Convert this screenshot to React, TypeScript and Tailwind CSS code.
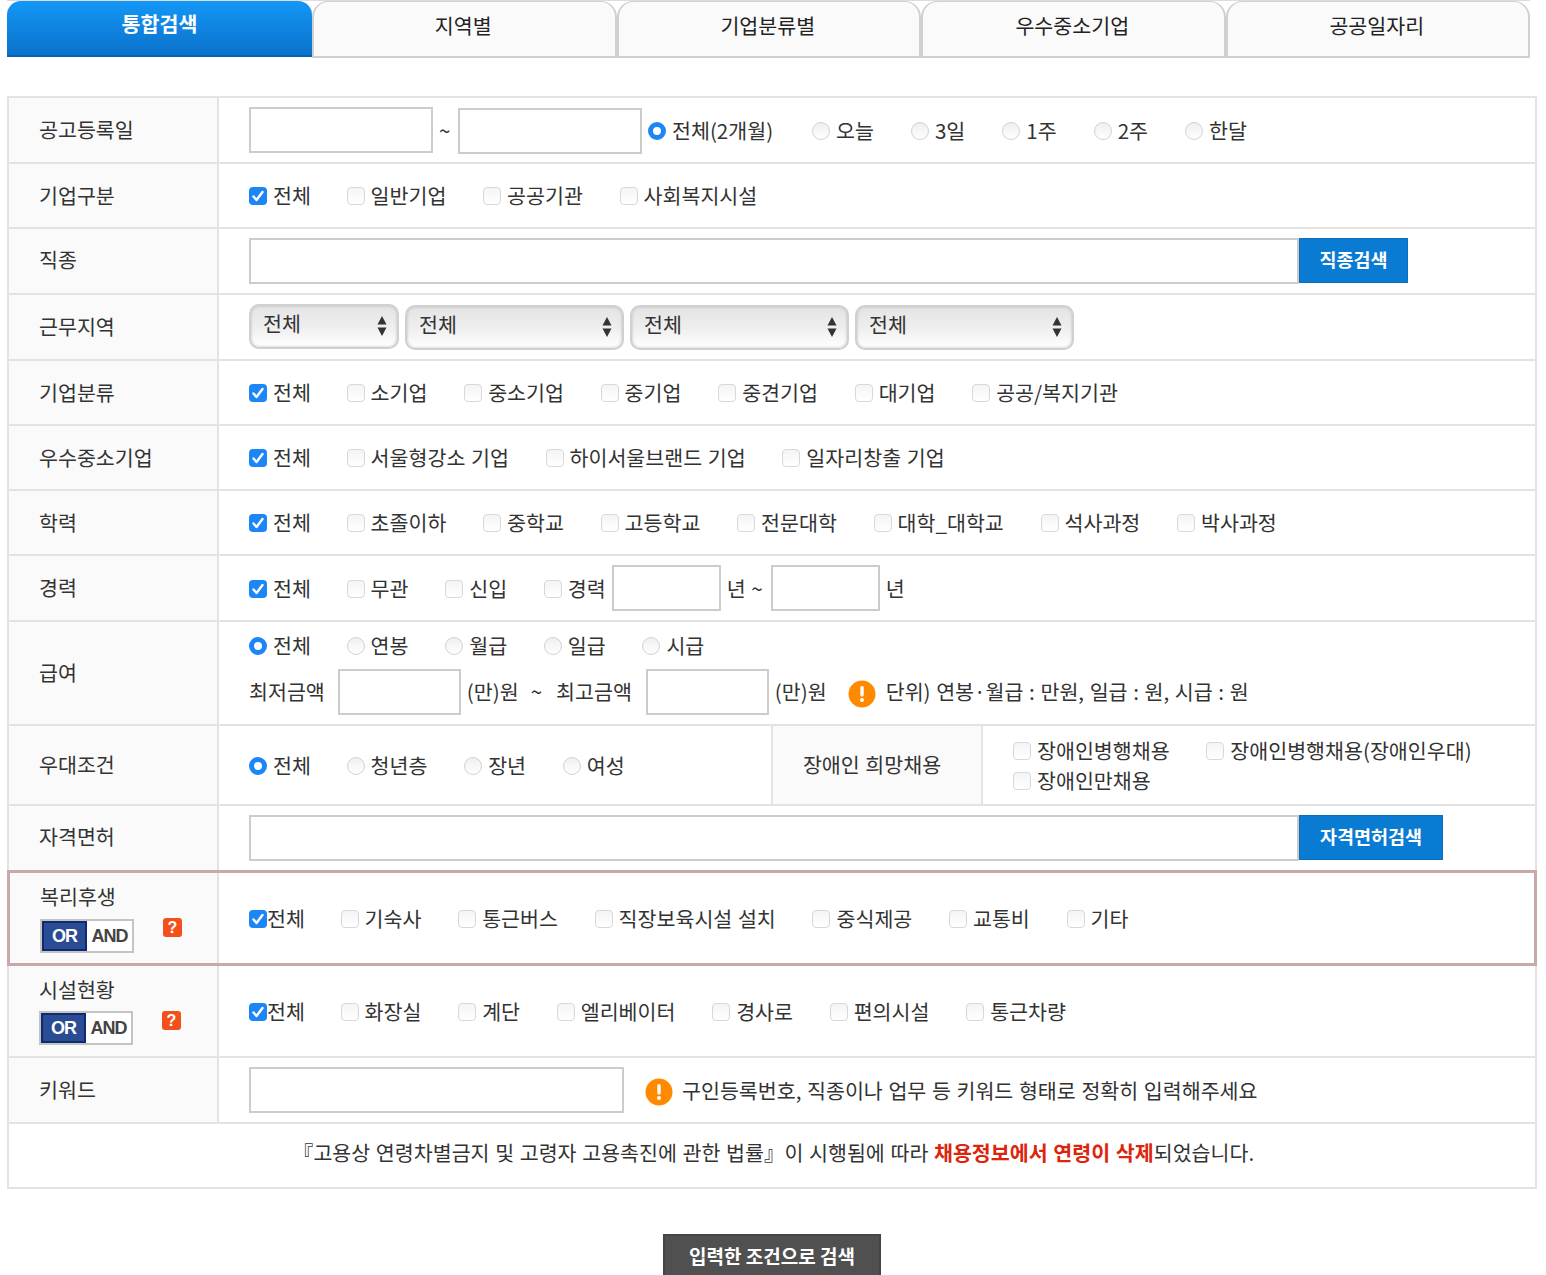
import type { ReactNode } from 'react';

const FONT = '[font-family:"Noto_Sans_CJK_KR","Liberation_Sans",sans-serif]';

function Box({ checked }: { checked?: boolean }) {
  if (checked) {
    return (
      <span className="mt-[1px] flex h-[18px] w-[18px] shrink-0 items-center justify-center rounded-[4px] bg-[#1c86f7]">
        <svg viewBox="0 0 18 18" className="h-[18px] w-[18px]" fill="none" stroke="#fff" strokeWidth="2.4" strokeLinecap="round" strokeLinejoin="round">
          <path d="M4.5 9.5l3 3.5 6-8" />
        </svg>
      </span>
    );
  }
  return <span className="mt-[1px] h-[18px] w-[18px] shrink-0 rounded-[4px] border border-[#d8d8d8] bg-gradient-to-b from-[#f4f4f4] to-white" />;
}

function Radio({ checked }: { checked?: boolean }) {
  if (checked) {
    return <span className="mt-[1px] h-[18px] w-[18px] shrink-0 rounded-full border-[5px] border-[#1c86f7] bg-white" />;
  }
  return <span className="mt-[1px] h-[18px] w-[18px] shrink-0 rounded-full border border-[#d2d2d2] bg-gradient-to-b from-[#efefef] to-white" />;
}

function Check({ label, checked, tight }: { label: string; checked?: boolean; tight?: boolean }) {
  return (
    <label className={`flex items-center whitespace-nowrap ${tight ? '' : 'gap-[6px]'} ${checked ? '-mr-[1px]' : ''}`}>
      <Box checked={checked} />
      <span>{label}</span>
    </label>
  );
}

function RadioOpt({ label, checked }: { label: string; checked?: boolean }) {
  return (
    <label className={`flex items-center gap-[6px] whitespace-nowrap ${checked ? '-mr-[1px]' : ''}`}>
      <Radio checked={checked} />
      <span>{label}</span>
    </label>
  );
}

function Field({ className }: { className: string }) {
  return <input type="text" className={`h-[46px] border-2 border-[#cccccc] bg-white ${className}`} />;
}

function Row({ label, height, children, last }: { label: ReactNode; height: string; children: ReactNode; last?: boolean }) {
  return (
    <div className={`flex ${height} ${last ? '' : 'border-b-2 border-[#e3e3e3]'}`}>
      <div className="flex w-[210px] shrink-0 items-center border-r-2 border-[#e3e3e3] bg-[#fafafa] pb-[1px] pl-[30px]">{label}</div>
      <div className="flex min-w-0 flex-1 items-center pl-[30px]">{children}</div>
    </div>
  );
}

function SelectBox({ width, className }: { width: string; className?: string }) {
  return (
    <div className={`flex h-[45px] ${width} ${className ?? ''} items-center justify-between rounded-[10px] border-2 border-[#d0d0d0] bg-gradient-to-b from-[#e4e4e4] via-[#eeeeee] to-white pb-[6px] pl-[12px] pr-[10px] shadow-[inset_0_0_3px_#bbb]`}>
      <span>전체</span>
      <svg viewBox="0 0 10 20" className="mt-[4px] h-[20px] w-[10px]" fill="#333">
        <path d="M5 0l4.500 8.500h-9z M5 20l4.500-8.500h-9z" />
      </svg>
    </div>
  );
}

function Bang() {
  return (
    <svg viewBox="0 0 28 28" className="h-[28px] w-[28px] shrink-0">
      <circle cx="14" cy="14" r="13.500" fill="#ff8a00" />
      <rect x="12.300" y="6" width="3.400" height="10.500" rx="1.500" fill="#fff" />
      <circle cx="14" cy="20" r="2" fill="#fff" />
    </svg>
  );
}

function OrAnd({ label }: { label: string }) {
  return (
    <div className="flex w-[150px] flex-col">
      <span className="mb-[9px] leading-[26px]">{label}</span>
      <div className="flex items-center">
        <div className="flex h-[34px] w-[94px] border-2 border-[#c4c4c4] bg-white font-['Liberation_Sans',sans-serif] text-[18px] font-bold tracking-[-1px]">
          <span className="flex w-[45px] items-center justify-center border-2 border-[#10296f] bg-[#2a4c94] pt-[1px] text-white">OR</span>
          <span className="flex flex-1 items-center justify-center pt-[1px] text-[#444]">AND</span>
        </div>
        <span className="mb-[16px] ml-[29px] flex h-[19px] w-[19px] items-center justify-center rounded-[3px] bg-[#f4511a] font-['Liberation_Sans',sans-serif] text-[16px] font-bold text-white">?</span>
      </div>
    </div>
  );
}

const tabs = ['지역별', '기업분류별', '우수중소기업', '공공일자리'];

export default function App() {
  return (
    <div className={`h-[1275px] w-[1546px] overflow-hidden bg-white text-[20.6px] leading-[27px] text-[#333] [word-spacing:1px] ${FONT}`}>
      {/* 상단 탭 */}
      <div className="ml-[7px] flex h-[58px] w-[1523px] border-t border-[#dddddd]">
        <div className="flex h-[56px] w-[305px] justify-center rounded-t-[14px] border-b-2 border-[#0563b0] bg-gradient-to-b from-[#1397f7] to-[#0b72ca] pt-[9px] font-bold text-white">
          통합검색
        </div>
        {tabs.map((tab) => (
          <div key={tab} className="flex h-[57px] w-[304.500px] justify-center rounded-t-[16px] border-x-2 border-b-2 border-t border-[#d0d0d0] bg-[#fafafa] pr-[2px] pt-[10px] text-[#222]">
            {tab}
          </div>
        ))}
      </div>

      {/* 검색 조건 표 */}
      <div className="ml-[7px] mt-[38px] w-[1530px] border-2 border-[#e3e3e3]">
        <Row label="공고등록일" height="h-[66px]">
          <Field className="w-[184px]" />
          <span className="mx-[6px] w-[13px]">~</span>
          <Field className="mt-[2px] w-[184px]" />
          <div className="ml-[6px] flex gap-[37px]">
            <label className="flex items-center gap-[6px] whitespace-nowrap">
              <Radio checked />
              <span className="min-w-[103px]">전체(2개월)</span>
            </label>
            <RadioOpt label="오늘" />
            <RadioOpt label="3일" />
            <RadioOpt label="1주" />
            <RadioOpt label="2주" />
            <RadioOpt label="한달" />
          </div>
        </Row>
        <Row label="기업구분" height="h-[65px]">
          <div className="flex gap-[36.700px]">
            <Check label="전체" checked />
            <Check label="일반기업" />
            <Check label="공공기관" />
            <Check label="사회복지시설" />
          </div>
        </Row>
        <Row label={<span className="-mt-[3px]">직종</span>} height="h-[66px]">
          <Field className="w-[1050px]" />
          <button className="mb-[1px] h-[45px] w-[109px] border border-[#0b6fbe] bg-[#0a7bd2] pb-[3px] text-[18.500px] font-bold text-white">직종검색</button>
        </Row>
        <Row label="근무지역" height="h-[66px]">
          <div className="flex gap-[6px]">
            <SelectBox width="w-[150px]" />
            <SelectBox width="w-[219px]" className="mt-[1px]" />
            <SelectBox width="w-[219px]" className="mt-[1px]" />
            <SelectBox width="w-[219px]" className="mt-[1px]" />
          </div>
        </Row>
        <Row label="기업분류" height="h-[65px]">
          <div className="flex gap-[36.700px]">
            <Check label="전체" checked />
            <Check label="소기업" />
            <Check label="중소기업" />
            <Check label="중기업" />
            <Check label="중견기업" />
            <Check label="대기업" />
            <Check label="공공/복지기관" />
          </div>
        </Row>
        <Row label="우수중소기업" height="h-[65px]">
          <div className="flex gap-[36.700px]">
            <Check label="전체" checked />
            <Check label="서울형강소 기업" />
            <Check label="하이서울브랜드 기업" />
            <Check label="일자리창출 기업" />
          </div>
        </Row>
        <Row label="학력" height="h-[65px]">
          <div className="flex gap-[36.700px]">
            <Check label="전체" checked />
            <Check label="초졸이하" />
            <Check label="중학교" />
            <Check label="고등학교" />
            <Check label="전문대학" />
            <Check label="대학_대학교" />
            <Check label="석사과정" />
            <Check label="박사과정" />
          </div>
        </Row>
        <Row label="경력" height="h-[66px]">
          <div className="flex items-center">
            <div className="flex gap-[36.700px]">
              <Check label="전체" checked />
              <Check label="무관" />
              <Check label="신입" />
              <Check label="경력" />
            </div>
            <Field className="ml-[6px] w-[109px]" />
            <span className="ml-[6px] mr-[8px]">년 ~</span>
            <Field className="w-[109px]" />
            <span className="ml-[6px]">년</span>
          </div>
        </Row>
        <Row label="급여" height="h-[104px]">
          <div className="flex flex-col gap-[10px]">
            <div className="flex gap-[36.700px]">
              <RadioOpt label="전체" checked />
              <RadioOpt label="연봉" />
              <RadioOpt label="월급" />
              <RadioOpt label="일급" />
              <RadioOpt label="시급" />
            </div>
            <div className="flex items-center">
              <span>최저금액</span>
              <Field className="ml-[13px] w-[123px]" />
              <span className="ml-[6px]">(만)원</span>
              <span className="ml-[12px] mr-[14px]">~</span>
              <span>최고금액</span>
              <Field className="ml-[14px] w-[123px]" />
              <span className="ml-[6px]">(만)원</span>
              <span className="ml-[21px] mr-[10px] mt-[4px] flex"><Bang /></span>
              <span>단위) 연봉·월급 : 만원, 일급 : 원, 시급 : 원</span>
            </div>
          </div>
        </Row>
        <div className="flex h-[80px] border-b-2 border-[#e3e3e3]">
          <div className="flex w-[210px] shrink-0 items-center border-r-2 border-[#e3e3e3] bg-[#fafafa] pb-[1px] pl-[30px]">우대조건</div>
          <div className="flex w-[554px] items-center gap-[36.700px] border-r-2 border-[#e3e3e3] pl-[30px]">
            <RadioOpt label="전체" checked />
            <RadioOpt label="청년층" />
            <RadioOpt label="장년" />
            <RadioOpt label="여성" />
          </div>
          <div className="flex w-[210px] items-center justify-center border-r-2 border-[#e3e3e3] bg-[#fafafa] pb-[1px] pr-[10px]">장애인 희망채용</div>
          <div className="flex flex-col justify-center gap-[3px] pl-[30px]">
            <div className="flex gap-[36.700px]">
              <Check label="장애인병행채용" />
              <Check label="장애인병행채용(장애인우대)" />
            </div>
            <Check label="장애인만채용" />
          </div>
        </div>
        <Row label={<span className="-mt-[3px]">자격면허</span>} height="h-[64px]" last>
          <Field className="w-[1050px]" />
          <button className="mb-[1px] h-[45px] w-[144px] border border-[#0b6fbe] bg-[#0a7bd2] pb-[3px] text-[18.500px] font-bold text-white">자격면허검색</button>
        </Row>
        <div className="-mx-[2px] flex h-[96px] border-[3px] border-[#c8a9a9]">
          <div className="flex w-[209px] shrink-0 items-center border-r-2 border-[#e3e3e3] bg-[#fafafa] pl-[30px]">
            <OrAnd label="복리후생" />
          </div>
          <div className="flex items-center gap-[36.700px] pl-[30px]">
            <Check label="전체" checked tight />
            <Check label="기숙사" />
            <Check label="통근버스" />
            <Check label="직장보육시설 설치" />
            <Check label="중식제공" />
            <Check label="교통비" />
            <Check label="기타" />
          </div>
        </div>
        <Row label={<OrAnd label="시설현황" />} height="h-[92px]">
          <div className="flex gap-[36.700px]">
            <Check label="전체" checked tight />
            <Check label="화장실" />
            <Check label="계단" />
            <Check label="엘리베이터" />
            <Check label="경사로" />
            <Check label="편의시설" />
            <Check label="통근차량" />
          </div>
        </Row>
        <Row label="키워드" height="h-[66px]">
          <Field className="w-[375px]" />
          <span className="ml-[21px] mr-[9px] mt-[4px] flex"><Bang /></span>
          <span>구인등록번호, 직종이나 업무 등 키워드 형태로 정확히 입력해주세요</span>
        </Row>
        <div className="flex h-[63px] items-center justify-center pb-[6px] pl-[3px]">
          <span>
            『고용상 연령차별금지 및 고령자 고용촉진에 관한 법률』이 시행됨에 따라{' '}
            <strong className="font-bold text-[#db260d]">채용정보에서 연령이 삭제</strong>되었습니다.
          </span>
        </div>
      </div>

      {/* 검색 버튼 */}
      <div className="ml-[663px] mt-[45px]">
        <button className="h-[50px] w-[218px] border-2 border-[#444] bg-[#505050] pb-[8px] text-[19px] font-bold text-white">입력한 조건으로 검색</button>
      </div>
    </div>
  );
}
